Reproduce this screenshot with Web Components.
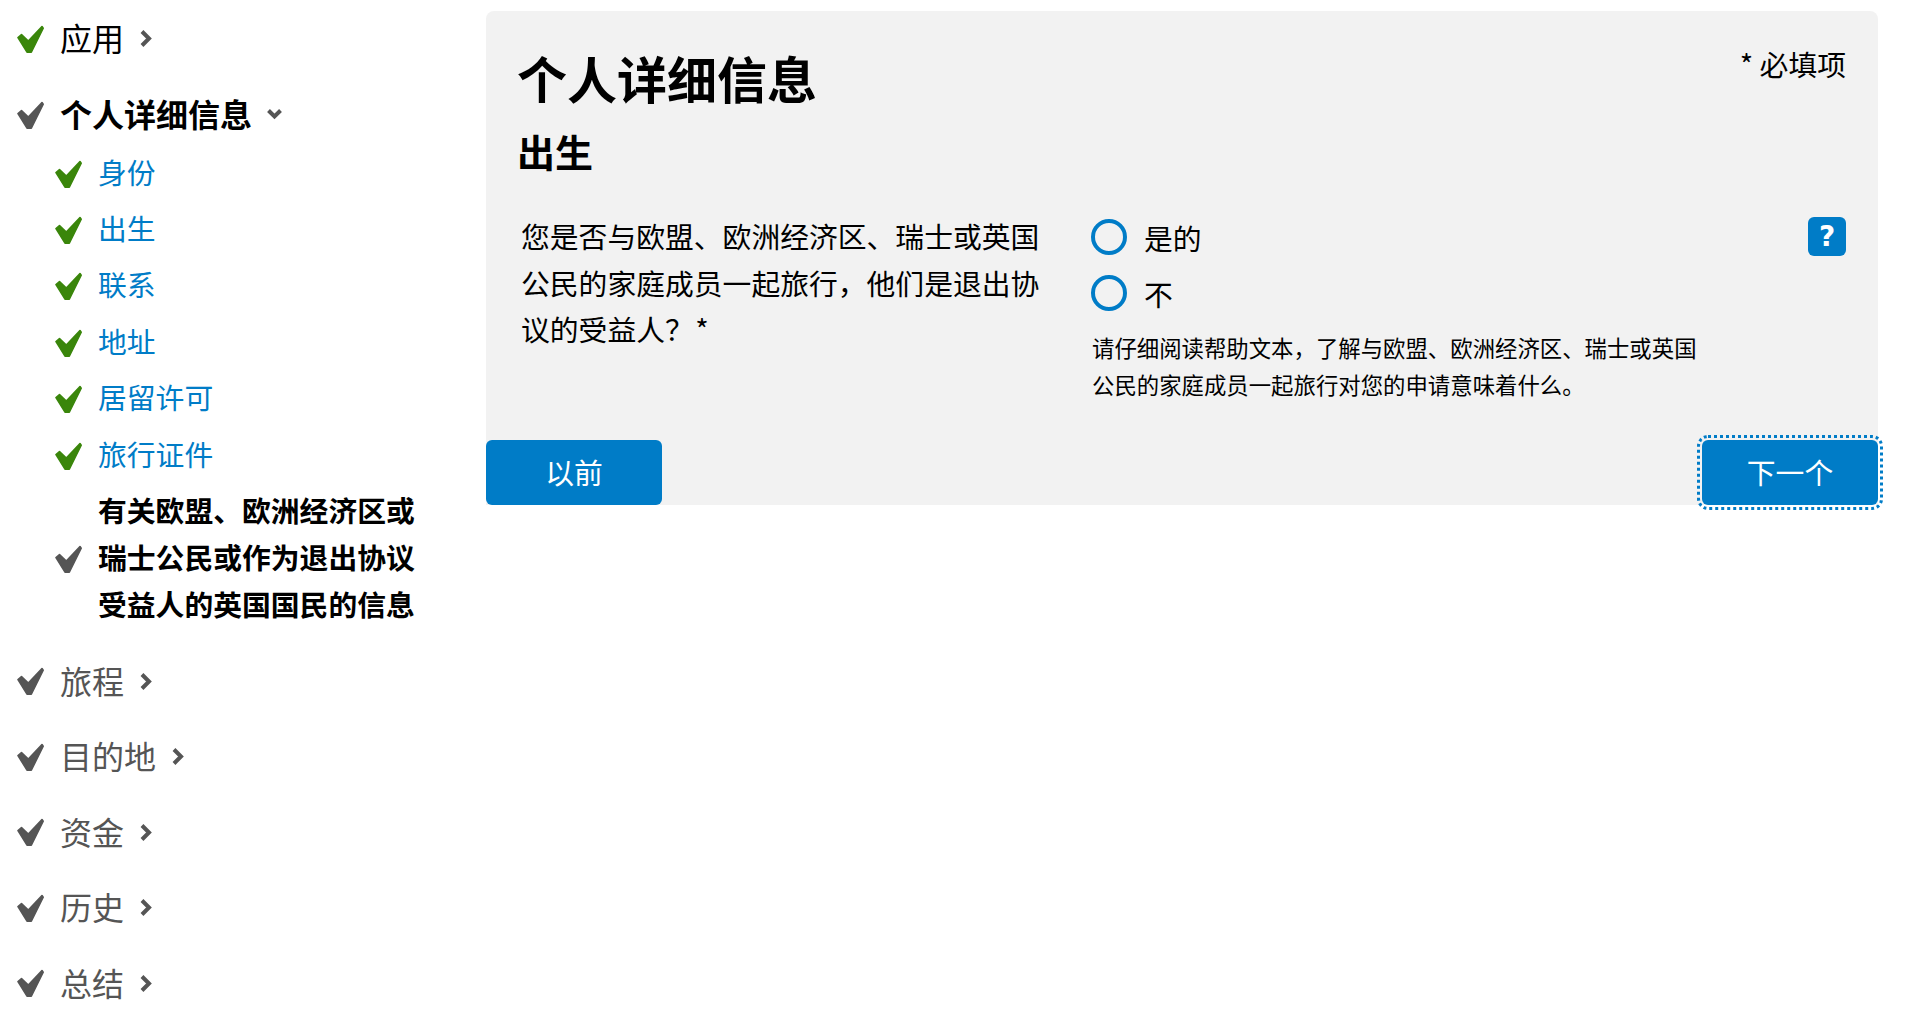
<!DOCTYPE html>
<html lang="zh">
<head>
<meta charset="utf-8">
<title>个人详细信息</title>
<style>
    html, body { margin: 0; background: #fff; }
    body {
        font-family: "Noto Sans CJK SC", "Liberation Sans", sans-serif;
        color: #000;
    }
</style>
</head>
<body>
<app-shell>
    <side-nav slot="nav">
        <nav-section label="应用" state="done" tone="dark"></nav-section>
        <nav-section label="个人详细信息" state="current" open>
            <nav-step label="身份" state="done"></nav-step>
            <nav-step label="出生" state="done"></nav-step>
            <nav-step label="联系" state="done"></nav-step>
            <nav-step label="地址" state="done"></nav-step>
            <nav-step label="居留许可" state="done"></nav-step>
            <nav-step label="旅行证件" state="done"></nav-step>
            <nav-step label="有关欧盟、欧洲经济区或瑞士公民或作为退出协议受益人的英国国民的信息" state="current"></nav-step>
        </nav-section>
        <nav-section label="旅程" state="todo" tone="grey"></nav-section>
        <nav-section label="目的地" state="todo" tone="grey"></nav-section>
        <nav-section label="资金" state="todo" tone="grey"></nav-section>
        <nav-section label="历史" state="todo" tone="grey"></nav-section>
        <nav-section label="总结" state="todo" tone="grey"></nav-section>
    </side-nav>
    <form-panel slot="main" heading="个人详细信息" sub="出生" note="* 必填项">
        <radio-question>
            <span slot="question">您是否与欧盟、欧洲经济区、瑞士或英国公民的家庭成员一起旅行&#xFF0C;他们是退出协议的受益人&#xFF1F; *</span>
            <radio-option>是的</radio-option>
            <radio-option>不</radio-option>
            <span slot="help">请仔细阅读帮助文本&#xFF0C;了解与欧盟、欧洲经济区、瑞士或英国公民的家庭成员一起旅行对您的申请意味着什么。</span>
        </radio-question>
        <action-button slot="prev">以前</action-button>
        <action-button slot="next" focused>下一个</action-button>
    </form-panel>
</app-shell>

<script>
const CHECK = `<svg class="check" width="27" height="28" viewBox="0 0 27 28" aria-hidden="true">
    <path d="M1 12.5 L4.5 9.5 L11.3 16 L25 1.5 L26.2 3.2 L14.3 27.2 L10 27.2 Z" fill="currentColor" stroke="currentColor" stroke-width="1.6" stroke-linejoin="round"/>
</svg>`;

class AppShell extends HTMLElement {
    constructor() {
        super();
        this.attachShadow({ mode: 'open' });
        this.shadowRoot.innerHTML = `
            <style>
                :host { display: flex; align-items: flex-start; width: 100%; }
                .nav { flex: 0 0 486px; }
                .main { flex: 0 0 1392px; padding-top: 11px; }
            </style>
            <div class="nav"><slot name="nav"></slot></div>
            <div class="main"><slot name="main"></slot></div>
        `;
    }
}

class SideNav extends HTMLElement {
    constructor() {
        super();
        this.attachShadow({ mode: 'open' });
        this.shadowRoot.innerHTML = `
            <style>
                :host { display: flex; flex-direction: column; gap: 24.4px; padding: 13.4px 0 0 17px; }
            </style>
            <slot></slot>
        `;
    }
}

class NavSection extends HTMLElement {
    constructor() {
        super();
        this.attachShadow({ mode: 'open' });
    }

    connectedCallback() {
        const open = this.hasAttribute('open');
        const tone = this.getAttribute('tone');
        const done = this.getAttribute('state') === 'done';
        const chevron = open
            ? '<path d="M1.5 1.5 L7.5 7.5 L13.5 1.5" />'
            : '<path d="M2 1.5 L9 8.5 L2 15.5" />';
        this.shadowRoot.innerHTML = `
            <style>
                :host { display: block; }
                .row {
                    display: flex;
                    align-items: center;
                    height: 51.2px;
                    font-size: 32px;
                    color: ${tone === 'grey' ? '#555' : '#000'};
                    font-weight: ${open ? 700 : 400};
                }
                .check { flex: none; color: ${done ? '#3a860b' : '#555'}; margin: 0 16px 0 0; }
                .label { margin-top: -3px; }
                .chev { flex: none; margin-left: ${open ? 15 : 16}px; }
                .steps { display: flex; flex-direction: column; gap: 12.6px; padding: 11.5px 0 3.8px 38px; }
            </style>
            <div class="row">
                ${CHECK}
                <span class="label">${this.getAttribute('label')}</span>
                <svg class="chev" width="${open ? 15 : 12}" height="${open ? 11 : 17}" viewBox="0 0 ${open ? 15 : 12} ${open ? 11 : 17}" fill="none" stroke="#555" stroke-width="4" aria-hidden="true">${chevron}</svg>
            </div>
            ${open ? '<div class="steps"><slot></slot></div>' : ''}
        `;
    }
}

class NavStep extends HTMLElement {
    constructor() {
        super();
        this.attachShadow({ mode: 'open' });
    }

    connectedCallback() {
        const current = this.getAttribute('state') === 'current';
        this.shadowRoot.innerHTML = `
            <style>
                :host { display: flex; align-items: center; font-size: 28.8px; line-height: 46.8px; }
                .check { flex: none; margin: 0 16px 0 0; color: ${current ? '#555' : '#3a860b'}; }
                .label { width: 318px; margin-top: -3px; color: ${current ? '#000' : '#007cc7'}; font-weight: ${current ? 700 : 400}; }
            </style>
            ${CHECK}
            <span class="label">${this.getAttribute('label')}</span>
        `;
    }
}

class FormPanel extends HTMLElement {
    constructor() {
        super();
        this.attachShadow({ mode: 'open' });
    }

    connectedCallback() {
        this.shadowRoot.innerHTML = `
            <style>
                :host { display: block; background: #f2f2f2; border-radius: 8px 8px 0 0; height: 494px; }
                .wrap { display: flex; flex-direction: column; height: 100%; }
                .head { display: flex; justify-content: space-between; padding: 30px 32px 0 31px; }
                h1 { margin: 0; font-size: 50px; line-height: 72px; font-weight: 700; }
                h2 { margin: 10px 0 0; font-size: 38px; line-height: 56px; font-weight: 700; }
                .note { font-size: 28.8px; line-height: 46px; }
                .body { flex: 1; padding: 34px 32px 0 35px; }
                .actions { display: flex; justify-content: space-between; align-items: flex-end; }
            </style>
            <div class="wrap">
                <div class="head">
                    <div>
                        <h1>${this.getAttribute('heading')}</h1>
                        <h2>${this.getAttribute('sub')}</h2>
                    </div>
                    <div class="note">${this.getAttribute('note')}</div>
                </div>
                <div class="body"><slot></slot></div>
                <div class="actions">
                    <slot name="prev"></slot>
                    <slot name="next"></slot>
                </div>
            </div>
        `;
    }
}

class RadioQuestion extends HTMLElement {
    constructor() {
        super();
        this.attachShadow({ mode: 'open' });
        this.shadowRoot.innerHTML = `
            <style>
                :host { display: grid; grid-template-columns: 519px 1fr 38px; column-gap: 51px; }
                .q { font-size: 28.8px; line-height: 46.6px; word-spacing: -5px; }
                .opts { display: flex; flex-direction: column; gap: 20px; padding-top: 6px; }
                .help { font-size: 22.4px; line-height: 36.5px; width: 610px; margin: 18px 0 0 1px; }
                .helpbtn {
                    width: 38px; height: 39px; margin-top: 4px;
                    background: #007cc7; border-radius: 6px; color: #fff;
                    display: flex; align-items: center; justify-content: center;
                    font: 700 28px/1 "DejaVu Sans", sans-serif;
                }
            </style>
            <div class="q"><slot name="question"></slot></div>
            <div>
                <div class="opts"><slot></slot></div>
                <div class="help"><slot name="help"></slot></div>
            </div>
            <div class="helpbtn">?</div>
        `;
    }
}

class RadioOption extends HTMLElement {
    constructor() {
        super();
        this.attachShadow({ mode: 'open' });
        this.shadowRoot.innerHTML = `
            <style>
                :host { display: flex; align-items: flex-start; height: 36px; font-size: 28.8px; line-height: 46px; }
                .dot { flex: none; box-sizing: border-box; width: 36px; height: 36px; border: 4px solid #007cc7; border-radius: 50%; margin-right: 17px; }
                .text { margin-top: -4px; }
            </style>
            <span class="dot"></span>
            <span class="text"><slot></slot></span>
        `;
    }
}

class ActionButton extends HTMLElement {
    constructor() {
        super();
        this.attachShadow({ mode: 'open' });
        this.shadowRoot.innerHTML = `
            <style>
                :host { display: block; }
                .btn {
                    box-sizing: border-box; width: 176px; height: 65px; padding-bottom: 2px;
                    display: flex; align-items: center; justify-content: center;
                    background: #007cc7; color: #fff; border-radius: 6px;
                    font-size: 28.8px;
                }
                :host([focused]) .btn { outline: 3px dotted #007cc7; outline-offset: 2px; }
            </style>
            <div class="btn"><slot></slot></div>
        `;
    }
}

customElements.define('app-shell', AppShell);
customElements.define('side-nav', SideNav);
customElements.define('nav-section', NavSection);
customElements.define('nav-step', NavStep);
customElements.define('form-panel', FormPanel);
customElements.define('radio-question', RadioQuestion);
customElements.define('radio-option', RadioOption);
customElements.define('action-button', ActionButton);
</script>
</body>
</html>
